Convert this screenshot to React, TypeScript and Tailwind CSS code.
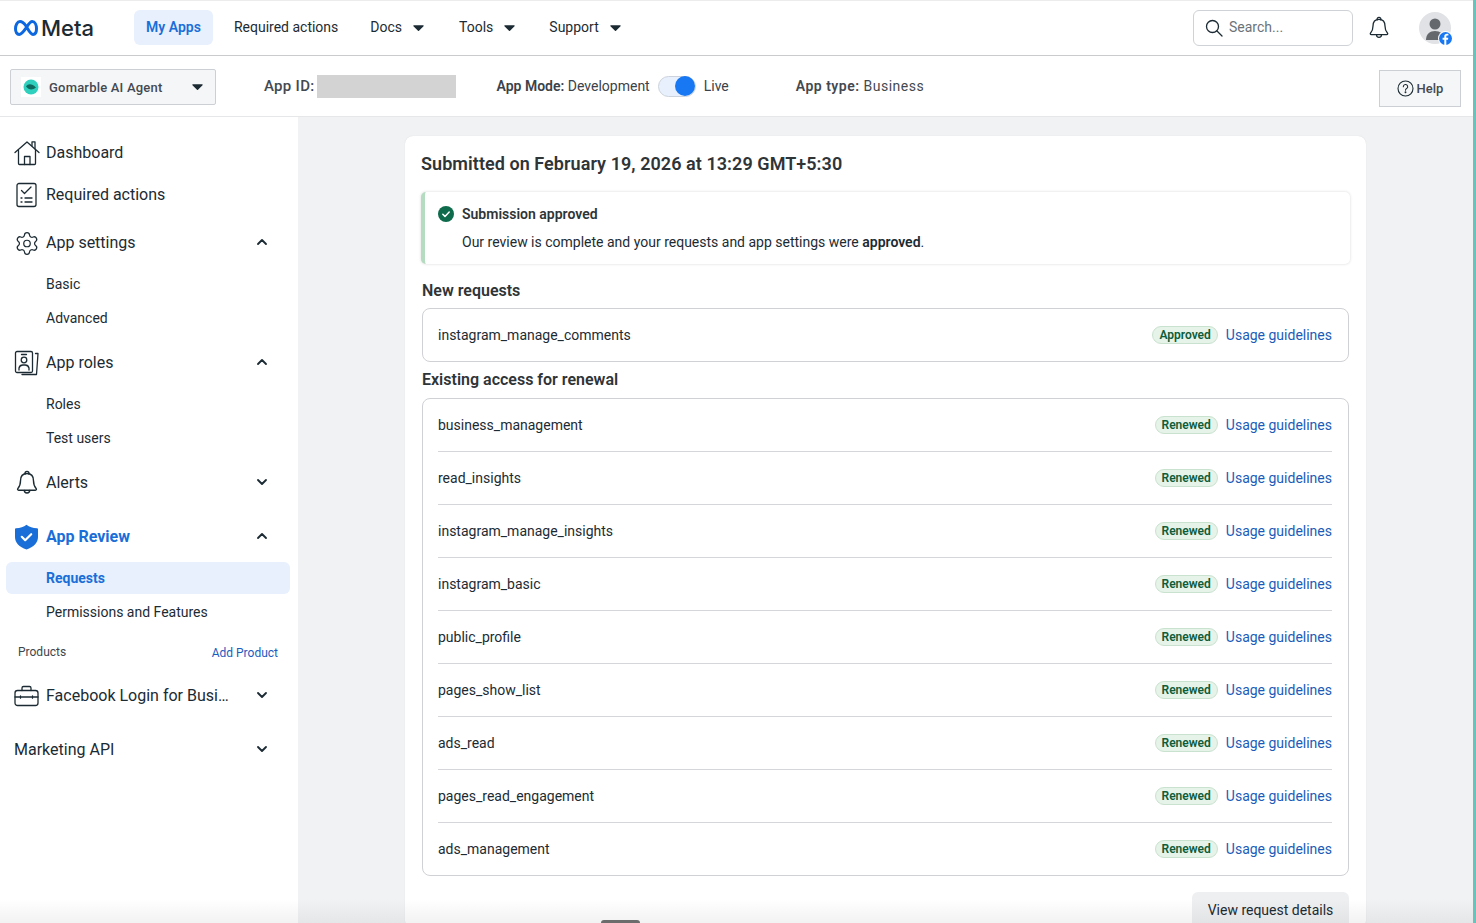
import { ChevronDown, ChevronUp, Settings } from "lucide-react";
import type { ReactNode } from "react";

const renewed = [
  "business_management",
  "read_insights",
  "instagram_manage_insights",
  "instagram_basic",
  "public_profile",
  "pages_show_list",
  "ads_read",
  "pages_read_engagement",
  "ads_management",
];

function Caret({ className = "" }: { className?: string }) {
  return (
    <svg width="11" height="6" viewBox="0 0 11 6" className={className}>
      <path d="M.9.2h9.200a.6.6 0 0 1 .45 1L6 5.700a.7.7 0 0 1-1 0L.45 1.200A.6.6 0 0 1 .9.2z" fill="#1c2b33" />
    </svg>
  );
}

function MetaLogo() {
  return (
    <div className="flex items-center">
      <svg width="24" height="16" viewBox="0 0 24 16" fill="none" className="mr-[3px]">
        <path
          d="M12 6C10 3.200 8 1.600 6 1.600 3.400 1.600 1.500 4.800 1.500 8.800c0 3.300 1.500 5.600 3.700 5.600C7.700 14.400 9.600 11.500 12 8c2.400-3.500 4-6.400 6.200-6.400 2.600 0 4.300 3.200 4.300 7.200 0 3.300-1.400 5.600-3.500 5.600C16.300 14.400 14.200 9.500 12 6z"
          stroke="#0d68e0"
          strokeWidth="3"
          strokeLinejoin="round"
        />
      </svg>
      <span className="text-[22px] leading-none font-medium text-[#1c2b33] font-['Inter',sans-serif]">Meta</span>
    </div>
  );
}

function NavLink({ children, caret }: { children: ReactNode; caret?: boolean }) {
  return (
    <div className="flex items-center gap-[11px] text-[14px] text-[#1c2b33]">
      <span>{children}</span>
      {caret && <Caret />}
    </div>
  );
}

function HomeIcon() {
  return (
    <svg width="26" height="26" viewBox="0 0 26 26" fill="none" stroke="#1c2b33" strokeWidth="1.300" strokeLinejoin="round" strokeLinecap="round">
      <path d="M1 12.500 13 2l12 10.500" />
      <path d="M4.500 10.500V23.500a1 1 0 0 0 1 1h15a1 1 0 0 0 1-1V10.500" />
      <path d="M10.500 24.500V16.500h5.500v8" />
      <path d="M18 5.500V1.800h3V9" />
    </svg>
  );
}

function ChecklistIcon() {
  return (
    <svg width="26" height="26" viewBox="0 0 26 26" fill="none" stroke="#1c2b33" strokeWidth="1.300" strokeLinecap="round" strokeLinejoin="round">
      <rect x="3" y="1.500" width="19" height="23" rx="2" />
      <path d="M7.500 8.500l3 3 6.500-6.500" />
      <path d="M7 16h1M11 16h7M7 20h1M11 20h7" />
    </svg>
  );
}

function RolesIcon() {
  return (
    <svg width="26" height="26" viewBox="0 0 26 26" fill="none" stroke="#1c2b33" strokeWidth="1.300" strokeLinecap="round" strokeLinejoin="round">
      <rect x="1.500" y="1.500" width="17" height="21" rx="1.500" />
      <path d="M7.500 4.500h5" />
      <circle cx="10" cy="10" r="2.800" />
      <path d="M5 20v-2a4 4 0 0 1 4-3h2a4 4 0 0 1 4 3v2" />
      <path d="M21.500 3.500h2.500L22.500 24.500H8" />
    </svg>
  );
}

function ShieldIcon() {
  return (
    <svg width="26" height="26" viewBox="0 0 26 26">
      <path d="M12.500.8c2.800 2.300 6.300 3.300 10.500 3.500a1 1 0 0 1 1 1V13c0 5.600-4.200 10-11.500 12.400C5.200 23 1 18.600 1 13V5.300a1 1 0 0 1 1-1C6.200 4.100 9.700 3.100 12.500.8z" fill="#1a6ed8" />
      <path d="M7.800 12.800l3.400 3.400 6-6" fill="none" stroke="#fff" strokeWidth="2.200" strokeLinecap="round" strokeLinejoin="round" />
    </svg>
  );
}

function CaseIcon() {
  return (
    <svg width="26" height="26" viewBox="0 0 26 26" fill="none" stroke="#1c2b33" strokeWidth="1.300" strokeLinecap="round" strokeLinejoin="round">
      <rect x="1" y="7.500" width="23" height="15" rx="2.500" />
      <path d="M8 7.500V5a1.500 1.500 0 0 1 1.500-1.500h6A1.500 1.500 0 0 1 17 5v2.500" />
      <path d="M1 14h5.500M18.500 14H24M6.500 12.800v2.400M18.500 12.800v2.400M7.500 14h10" />
    </svg>
  );
}

function BellIcon({ size = 26, stroke = 1.300 }: { size?: number; stroke?: number }) {
  return (
    <svg width={size} height={size} viewBox="0 0 24 24" fill="none" stroke="#1c2b33" strokeWidth={stroke} strokeLinejoin="round" strokeLinecap="round">
      <path d="M10.200 3.800a1.900 1.900 0 1 1 3.600 0" />
      <path d="M12 3.300c3.800 0 6 2.700 6 6.700 0 3.500.8 5.300 2.400 7 .6.700.3 1.700-.7 1.700H4.300c-1 0-1.300-1-.7-1.700C5.200 15.300 6 13.500 6 10c0-4 2.200-6.700 6-6.700z" />
      <path d="M9.500 18.800c0 1.500 1.100 2.500 2.500 2.500s2.500-1 2.500-2.500" />
    </svg>
  );
}

function MainItem({
  icon,
  label,
  chevron,
  active,
  className = "",
}: {
  icon?: ReactNode;
  label: string;
  chevron?: "up" | "down";
  active?: boolean;
  className?: string;
}) {
  return (
    <div className={`flex h-[42px] items-center pl-[14px] pr-[28px] pt-[2px] ${className}`}>
      {icon && <span className="mr-[6px] flex w-[26px] justify-center">{icon}</span>}
      <span className={`flex-1 truncate text-[16px] ${active ? "font-bold text-[#1a6ed8]" : "text-[#1c2b33]"}`}>{label}</span>
      {chevron === "up" && <ChevronUp size={16} strokeWidth={2.800} color="#1c2b33" className="-mt-[2px]" />}
      {chevron === "down" && <ChevronDown size={16} strokeWidth={2.800} color="#1c2b33" className="-mt-[2px]" />}
    </div>
  );
}

function SubItem({ label, className = "" }: { label: string; className?: string }) {
  return <div className={`flex h-[34px] items-center pl-[46px] text-[14px] text-[#1c2b33] ${className}`}>{label}</div>;
}

function Sidebar() {
  return (
    <aside className="w-[298px] shrink-0 bg-white pt-[14px]">
      <MainItem icon={<HomeIcon />} label="Dashboard" />
      <MainItem icon={<ChecklistIcon />} label="Required actions" />
      <MainItem className="mt-[6px]" icon={<Settings size={27} strokeWidth={1.150} color="#1c2b33" />} label="App settings" chevron="up" />
      <SubItem className="mt-[4px]" label="Basic" />
      <SubItem label="Advanced" />
      <MainItem className="mt-[6px]" icon={<RolesIcon />} label="App roles" chevron="up" />
      <SubItem className="mt-[4px]" label="Roles" />
      <SubItem label="Test users" />
      <MainItem className="mt-[6px]" icon={<BellIcon />} label="Alerts" chevron="down" />
      <MainItem className="mt-[12px]" icon={<ShieldIcon />} label="App Review" chevron="up" active />
      <div className="ml-[6px] mr-[8px] mt-[5px] flex h-[32px] items-center rounded-[6px] bg-[#e7f0fc] pl-[40px] text-[14px] font-bold text-[#1a6ed8]">Requests</div>
      <SubItem className="mt-[1px]" label="Permissions and Features" />
      <div className="mt-[11px] flex h-[24px] items-center justify-between pl-[18px] pr-[20px] text-[12px]">
        <span className="text-[#3c464d]">Products</span>
        <span className="pt-[1px] text-[#1a5cc0]">Add Product</span>
      </div>
      <MainItem className="mt-[10px]" icon={<CaseIcon />} label="Facebook Login for Busi…" chevron="down" />
      <MainItem className="mt-[12px]" label="Marketing API" chevron="down" />
    </aside>
  );
}

function Badge({ label }: { label: string }) {
  return (
    <span className="flex h-[18px] items-center rounded-full border border-[#c9e2cf] bg-[#e6f3e8] px-[6px] text-[12px] font-semibold text-[#0e5c3a]">
      {label}
    </span>
  );
}

function PermissionRow({ name, status, last }: { name: string; status: string; last?: boolean }) {
  return (
    <div className={`ml-[15px] mr-[16px] flex items-center justify-between ${last ? "h-[52px]" : "h-[53px] border-b border-[#d4d6d9]"}`}>
      <span className="text-[14px] text-[#1c2b33]">{name}</span>
      <div className="flex items-center gap-[8px]">
        <Badge label={status} />
        <span className="text-[14px] text-[#1a5cb8]">Usage guidelines</span>
      </div>
    </div>
  );
}

export default function App() {
  return (
    <div className="flex h-[923px] w-[1476px] overflow-hidden bg-white font-['Roboto',sans-serif]">
      <div className="relative flex min-w-0 flex-1 flex-col">
        <header className="flex h-[56px] shrink-0 items-center border-t border-b border-t-[#ececec] border-b-[#c9cbcd] pb-[1px] pl-[14px] pr-[22px]">
          <MetaLogo />
          <div className="ml-[40px] flex h-[35px] items-center rounded-[6px] bg-[#e7f0fc] px-[12px] text-[14px] font-semibold text-[#1a6ed8]">My Apps</div>
          <div className="ml-[21px] flex items-center">
            <NavLink>Required actions</NavLink>
            <div className="ml-[32px]"><NavLink caret>Docs</NavLink></div>
            <div className="ml-[35px]"><NavLink caret>Tools</NavLink></div>
            <div className="ml-[34px]"><NavLink caret>Support</NavLink></div>
          </div>
          <div className="ml-auto flex h-[36px] w-[160px] items-center gap-[6px] rounded-[6px] border border-[#cfd2d6] pl-[11px]">
            <svg width="18" height="18" viewBox="0 0 18 18" fill="none" stroke="#1c2b33" strokeWidth="1.300" strokeLinecap="round">
              <circle cx="7.500" cy="7.500" r="6" />
              <path d="M12 12l5 5" />
            </svg>
            <span className="text-[14px] text-[#6b7379]">Search...</span>
          </div>
          <span className="ml-[14px]"><BellIcon size={24} stroke={1.300} /></span>
          <div className="relative ml-[28px] flex h-[32px] w-[32px] items-center justify-center rounded-full bg-[#e0e2e5]">
            <svg width="24" height="28" viewBox="0 0 24 28" className="mt-[2px]">
              <circle cx="12" cy="9" r="5.500" fill="#65696e" />
              <path d="M3 25c0-6 4-9 9-9s9 3 9 9z" fill="#65696e" />
            </svg>
            <svg width="15" height="15" viewBox="0 0 15 15" className="absolute bottom-[-2px] right-[-2px]">
              <circle cx="7.500" cy="7.500" r="7.500" fill="#fff" />
              <circle cx="7.500" cy="7.500" r="6.500" fill="#1877f2" />
              <path d="M8.300 14V8.700h1.700l.3-2H8.300V5.500c0-.6.300-1 1-1h1.100V2.800c-.4-.1-.9-.1-1.400-.1-1.700 0-2.700 1-2.700 2.700v1.300H4.600v2h1.700V14z" fill="#fff" />
            </svg>
          </div>
        </header>

        <div className="flex h-[61px] shrink-0 items-center border-b border-[#e6e7e9] pl-[10px] pr-[12px] shadow-[0_1px_1px_rgba(0,0,0,0.04)]">
          <div className="mt-[2px] flex h-[36px] w-[206px] items-center rounded-[2px] border border-[#ccd0d5] bg-[#f5f6f7] pl-[10px] pr-[12px]">
            <span className="flex h-[20px] w-[20px] items-center justify-center bg-white">
              <svg width="16" height="16" viewBox="0 0 16 16">
                <circle cx="8" cy="8" r="7.500" fill="#2fd0bd" />
                <path d="M3 7.500c2-3 6-3 10 1-3 2.500-7 3-10-1z" fill="#10695f" />
              </svg>
            </span>
            <span className="ml-[8px] flex-1 pt-[1px] text-[13px] font-medium tracking-[0.2px] text-[#444950]">Gomarble AI Agent</span>
            <Caret />
          </div>
          <span className="ml-[48px] text-[15px] font-medium tracking-[0.3px] text-[#444950]">App ID:</span>
          <div className="ml-[2px] h-[23px] w-[139px] bg-[#d3d3d3]" />
          <div className="ml-[41px] flex items-center text-[14px] text-[#3b4249]">
            <span><span className="font-semibold">App Mode:</span> Development</span>
            <div className="ml-[8px] flex h-[21px] w-[38px] items-center justify-end rounded-full border border-[#ccd3dc] bg-[#e7f0fc]">
              <span className="h-[20px] w-[20px] rounded-full bg-[#1877f2]" />
            </div>
            <span className="ml-[8px]">Live</span>
          </div>
          <div className="ml-[67px] text-[14px] tracking-[0.5px] text-[#444950]">
            <span className="font-semibold">App type:</span> Business
          </div>
          <div className="ml-auto mt-[4px] flex h-[37px] w-[82px] items-center justify-center gap-[3px] border border-[#ccd0d5] bg-[#f5f6f7] text-[13px] font-medium text-[#444950]">
            <svg width="17" height="17" viewBox="0 0 17 17" fill="none" stroke="#1c2b33" strokeWidth="1.100">
              <circle cx="8.500" cy="8.500" r="7.500" />
              <path d="M6.300 6.700a2.200 2.200 0 1 1 3.300 1.900c-.7.400-1.100.8-1.100 1.600" strokeLinecap="round" />
              <circle cx="8.500" cy="12.300" r=".4" fill="#1c2b33" />
            </svg>
            <span className="pt-[1px]">Help</span>
          </div>
        </div>

        <div className="flex min-h-0 flex-1">
          <Sidebar />
          <main className="min-w-0 flex-1 bg-[#f1f2f3] pl-[107px] pt-[19px]">
            <section className="w-[961px] rounded-[8px] bg-white px-[16px] shadow-[0_0_1px_rgba(0,0,0,0.15)]">
              <h1 className="mb-[2px] flex h-[54px] items-center text-[18px] font-semibold tracking-[0.06px] text-[#2f3437]">Submitted on February 19, 2026 at 13:29 GMT+5:30</h1>
              <div className="h-[72px] rounded-[5px] border-l-[4px] border-[#b5dcc0] bg-white pl-[13px] shadow-[0_0_3px_rgba(0,0,0,0.16)]">
                <div className="flex h-[44px] items-center gap-[8px]">
                  <svg width="16" height="16" viewBox="0 0 16 16">
                    <circle cx="8" cy="8" r="8" fill="#0e6b4b" />
                    <path d="M4.800 8.200l2.200 2.200 4.200-4.300" fill="none" stroke="#fff" strokeWidth="1.500" strokeLinecap="round" strokeLinejoin="round" />
                  </svg>
                  <span className="text-[14px] font-semibold text-[#2f3437]">Submission approved</span>
                </div>
                <p className="pl-[24px] text-[14px] leading-[12px] text-[#1c2b33]">
                  Our review is complete and your requests and app settings were <b className="font-semibold">approved</b>.
                </p>
              </div>
              <h2 className="flex h-[44px] items-center pl-[1px] pt-[9px] text-[16px] font-semibold text-[#2f3437]">New requests</h2>
              <div className="mx-[1px] rounded-[8px] border border-[#cfd1d4]">
                <PermissionRow name="instagram_manage_comments" status="Approved" last />
              </div>
              <h2 className="flex h-[36px] items-center pl-[1px] text-[16px] font-semibold text-[#2f3437]">Existing access for renewal</h2>
              <div className="mx-[1px] rounded-[8px] border border-[#cfd1d4]">
                {renewed.map((name, i) => (
                  <PermissionRow key={name} name={name} status="Renewed" last={i === renewed.length - 1} />
                ))}
              </div>
              <div className="flex justify-end pr-[1px] pt-[16px]">
                <div className="flex h-[36px] w-[157px] items-center justify-center rounded-[6px] bg-[#eeeff1] text-[14px] text-[#1c2b33]">View request details</div>
              </div>
            </section>
          </main>
        </div>

        <div className="pointer-events-none absolute inset-x-0 bottom-0 h-[24px] bg-gradient-to-b from-transparent to-black/5" />
        <div className="absolute bottom-0 left-[601px] h-[3px] w-[39px] rounded-t-[3px] bg-[#6c6c6c]" />
      </div>
      <div className="w-[3px] shrink-0 bg-[#66c4bd]" />
    </div>
  );
}
